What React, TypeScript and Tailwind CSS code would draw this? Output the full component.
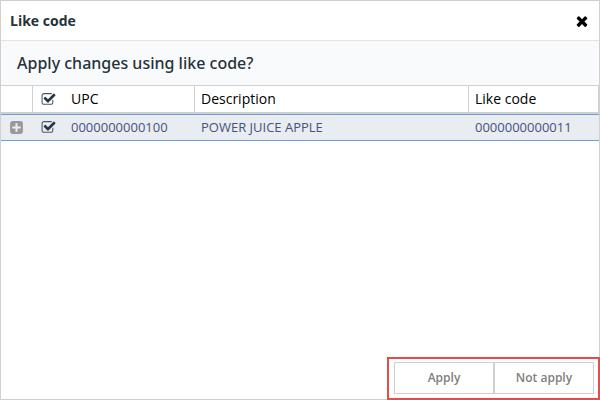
import { useState } from "react";

type IconProps = { className?: string; d: string };

function Icon({ className, d }: IconProps) {
  return (
    <svg viewBox="0 0 1792 1792" fill="currentColor" aria-hidden="true" className={className}>
      <path d={d} />
    </svg>
  );
}

const TIMES =
  "M1490 1322q0 40-28 68l-136 136q-28 28-68 28t-68-28l-294-294-294 294q-28 28-68 28t-68-28l-136-136q-28-28-28-68t28-68l294-294-294-294q-28-28-28-68t28-68l136-136q28-28 68-28t68 28l294 294 294-294q28-28 68-28t68 28l136 136q28 28 28 68t-28 68l-294 294 294 294q28 28 28 68z";
const PLUS_SQUARE =
  "M1408 960v-128q0-26-19-45t-45-19h-320v-320q0-26-19-45t-45-19h-128q-26 0-45 19t-19 45v320h-320q-26 0-45 19t-19 45v128q0 26 19 45t45 19h320v320q0 26 19 45t45 19h128q26 0 45-19t19-45v-320h320q26 0 45-19t19-45zm256-544v960q0 119-84.5 203.5t-203.5 84.5h-960q-119 0-203.5-84.5t-84.5-203.5v-960q0-119 84.5-203.5t203.5-84.5h960q119 0 203.5 84.5t84.5 203.5z";
const CHECK_BOX =
  "M1472 930v318q0 119-84.5 203.5t-203.5 84.5h-832q-119 0-203.5-84.5t-84.5-203.5v-832q0-119 84.5-203.5t203.5-84.5h832q63 0 117 25 15 7 18 23 3 17-9 29l-49 49q-10 10-23 10-3 0-9-2-23-6-45-6h-832q-66 0-113 47t-47 113v832q0 66 47 113t113 47h832q66 0 113-47t47-113v-254q0-13 9-22l64-64q10-10 23-10 6 0 12 3 20 8 20 29z";
const CHECK_MARK =
  "M1703 441l-814 814q-24 24-57 24t-57-24l-430-430q-24-24-24-57t24-57l110-110q24-24 57-24t57 24l263 263 647-647q24-24 57-24t57 24l110 110q24 24 24 57t-24 57z";

type TickProps = { label: string; checked: boolean; onChange: (value: boolean) => void };

function Tick({ label, checked, onChange }: TickProps) {
  return (
    <label className="relative block size-[15px] text-[#263445]">
      <input
        type="checkbox"
        aria-label={label}
        checked={checked}
        onChange={(e) => onChange(e.target.checked)}
        className="peer absolute inset-0 cursor-pointer appearance-none"
      />
      <Icon d={CHECK_BOX} className="pointer-events-none absolute inset-0 size-[15px] text-[#4a5866]" />
      <Icon
        d={CHECK_MARK}
        className="pointer-events-none absolute inset-0 hidden size-[15px] peer-checked:block"
      />
    </label>
  );
}

export default function App() {
  const [selected, setSelected] = useState(true);

  return (
    <div className="flex min-h-screen flex-col border border-[#d0d0d0] bg-white font-['Open_Sans','Noto_Sans',sans-serif] text-[#263238]">
      <header className="flex h-10 items-center justify-between border-b border-[#e4e4e4] pr-[9px] pl-[9px]">
        <h1 className="text-sm font-bold text-[#263238]">Like code</h1>
        <button type="button" aria-label="Close" className="text-black">
          <Icon d={TIMES} className="size-4" />
        </button>
      </header>

      <h2 className="flex h-11 items-center bg-[#f9fafc] px-4 font-['Noto_Sans','Open_Sans',sans-serif] text-base font-medium">
        Apply changes using like code?
      </h2>

      <table className="w-full table-fixed border-separate border-spacing-0 text-left">
        <colgroup>
          <col className="w-8" />
          <col className="w-8" />
          <col className="w-[130px]" />
          <col />
          <col className="w-[130px]" />
        </colgroup>
        <thead>
          <tr className="h-[29px] text-sm text-black *:border-t *:border-b-2 *:border-[#d0d0d0] *:p-0 *:font-normal">
            <th aria-label="Expand" className="border-r" />
            <th>
              <div className="pl-2">
                <Tick label="Select all" checked={selected} onChange={setSelected} />
              </div>
            </th>
            <th className="border-r">
              <div className="pl-1.5">UPC</div>
            </th>
            <th className="border-r">
              <div className="pl-1.5">Description</div>
            </th>
            <th className="border-r">
              <div className="pl-1.5">Like code</div>
            </th>
          </tr>
        </thead>
        <tbody>
          <tr className="h-[27px] bg-[#e9ecf1] text-[13px] text-[#46527c] *:border-y *:border-[#6a9fdc] *:p-0">
            <td>
              <button type="button" aria-label="Expand row" className="ml-2 block text-[#999]">
                <Icon d={PLUS_SQUARE} className="size-[15px]" />
              </button>
            </td>
            <td>
              <div className="pl-2">
                <Tick label="Select item" checked={selected} onChange={setSelected} />
              </div>
            </td>
            <td>
              <div className="pl-1.5">0000000000100</div>
            </td>
            <td>
              <div className="pl-1.5">POWER JUICE APPLE</div>
            </td>
            <td>
              <div className="pl-1.5">0000000000011</div>
            </td>
          </tr>
        </tbody>
      </table>

      <footer className="-mr-px -mb-px mt-auto flex self-end border-2 border-[#e84c4a] bg-white pt-[3px] pr-1 pb-1 pl-[5px] text-xs font-semibold text-[#808080]">
        <button type="button" className="h-8 w-[100px] border border-[#d0d0d0]">
          Apply
        </button>
        <button type="button" className="h-8 w-[100px] border border-[#d0d0d0]">
          Not apply
        </button>
      </footer>
    </div>
  );
}
